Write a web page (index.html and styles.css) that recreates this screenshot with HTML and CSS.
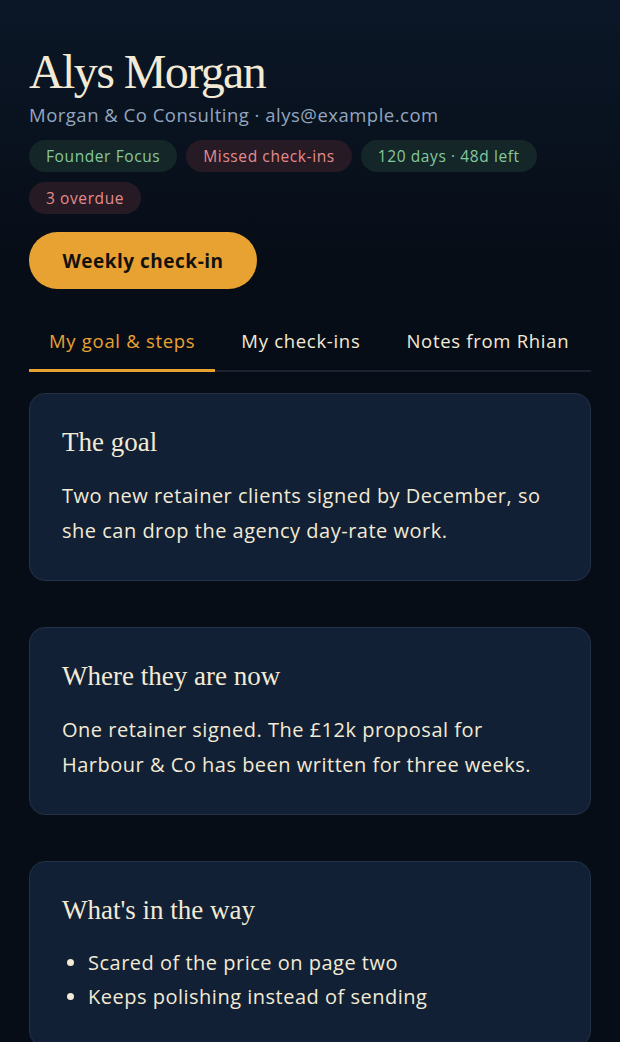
FILE: index.html
```html
<!DOCTYPE html>
<html lang="en">
<head>
  <meta charset="UTF-8">
  <meta name="viewport" content="width=device-width, initial-scale=1">
  <title>Alys Morgan</title>
  <link rel="stylesheet" href="styles.css">
</head>
<body>
<div class="page">
  <header class="client">
    <h1 class="client-name">Alys Morgan</h1>
    <p class="client-meta">Morgan &amp; Co Consulting · alys@example.com</p>
    <div class="chips">
      <span class="chip chip-green">Founder Focus</span>
      <span class="chip chip-red">Missed check-ins</span>
      <span class="chip chip-green">120 days · 48d left</span>
      <span class="chip chip-red">3 overdue</span>
    </div>
    <button class="checkin-btn">Weekly check-in</button>
  </header>

  <nav class="tabs">
    <button class="tab active">My goal &amp; steps</button>
    <button class="tab">My check-ins</button>
    <button class="tab">Notes from Rhian</button>
  </nav>

  <section class="card">
    <h2 class="card-title">The goal</h2>
    <p class="card-text">Two new retainer clients signed by December, so she can drop the agency day-rate work.</p>
  </section>

  <section class="card">
    <h2 class="card-title">Where they are now</h2>
    <p class="card-text">One retainer signed. The £12k proposal for Harbour &amp; Co has been written for three weeks.</p>
  </section>

  <section class="card">
    <h2 class="card-title">What's in the way</h2>
    <ul class="card-list">
      <li>Scared of the price on page two</li>
      <li>Keeps polishing instead of sending</li>
    </ul>
  </section>
</div>
</body>
</html>
```

FILE: styles.css
```css
* {
  box-sizing: border-box;
}
html {
  background: #070d17;
}
body {
  margin: 0;
  min-height: 100vh;
  font-family: "Open Sans", "Noto Sans", sans-serif;
  color: #f3ead5;
  background: linear-gradient(180deg, #0b1727 0%, #070d17 260px, #070d17 100%);
}
.page {
  padding: 44px 29px 0;
}
.client-name {
  margin: 0;
  font-family: "Liberation Serif", "DejaVu Serif", serif;
  font-weight: 400;
  font-size: 48px;
  line-height: 56px;
  color: #f3ead5;
  letter-spacing: -1.6px;
}
.client-meta {
  margin: 2px 0 0;
  font-size: 18.5px;
  line-height: 26px;
  letter-spacing: 0.5px;
  color: #93a6be;
}
.chips {
  display: flex;
  flex-wrap: wrap;
  gap: 10px 9px;
  margin-top: 12px;
}
.chip {
  display: inline-block;
  height: 32px;
  padding: 0 17px;
  border-radius: 16px;
  font-size: 15.5px;
  line-height: 32px;
  letter-spacing: 0.6px;
}
.chip-green {
  background: #142628;
  color: #84c99d;
}
.chip-red {
  background: #261a24;
  color: #e48c8d;
}
.checkin-btn {
  display: block;
  margin-top: 18px;
  width: 228px;
  height: 57px;
  border: none;
  border-radius: 29px;
  background: #e8a232;
  color: #12110e;
  font-family: inherit;
  font-weight: 700;
  font-size: 19px;
  letter-spacing: 0.5px;
  cursor: pointer;
}
.tabs {
  display: flex;
  gap: 6px;
  margin-top: 28px;
  border-bottom: 2px solid #1a2230;
}
.tab {
  flex-shrink: 0;
  white-space: nowrap;
  height: 55px;
  padding: 0 20px 6px;
  margin-bottom: -2px;
  background: none;
  border: none;
  border-bottom: 3px solid transparent;
  font-family: inherit;
  font-size: 18.5px;
  letter-spacing: 0.7px;
  color: #f3ead5;
  cursor: pointer;
}
.tab.active {
  color: #e8a232;
  border-bottom-color: #e8a232;
}
.card {
  margin-top: 21px;
  margin-bottom: 46px;
  padding: 30px 32px 32px;
  background: #112034;
  border: 1px solid #223147;
  border-radius: 16px;
}
.card + .card {
  margin-top: 0;
}
.card-title {
  margin: 0;
  font-family: "Liberation Serif", "DejaVu Serif", serif;
  font-weight: 400;
  font-size: 27px;
  line-height: 36px;
  color: #f3ead5;
}
.card-text {
  margin: 18px 0 0;
  font-size: 20px;
  line-height: 35px;
  letter-spacing: 0.5px;
}
.card-list {
  margin: 18px 0 0;
  padding-left: 26px;
  font-size: 20px;
  line-height: 34px;
  letter-spacing: 0.5px;
}
```
